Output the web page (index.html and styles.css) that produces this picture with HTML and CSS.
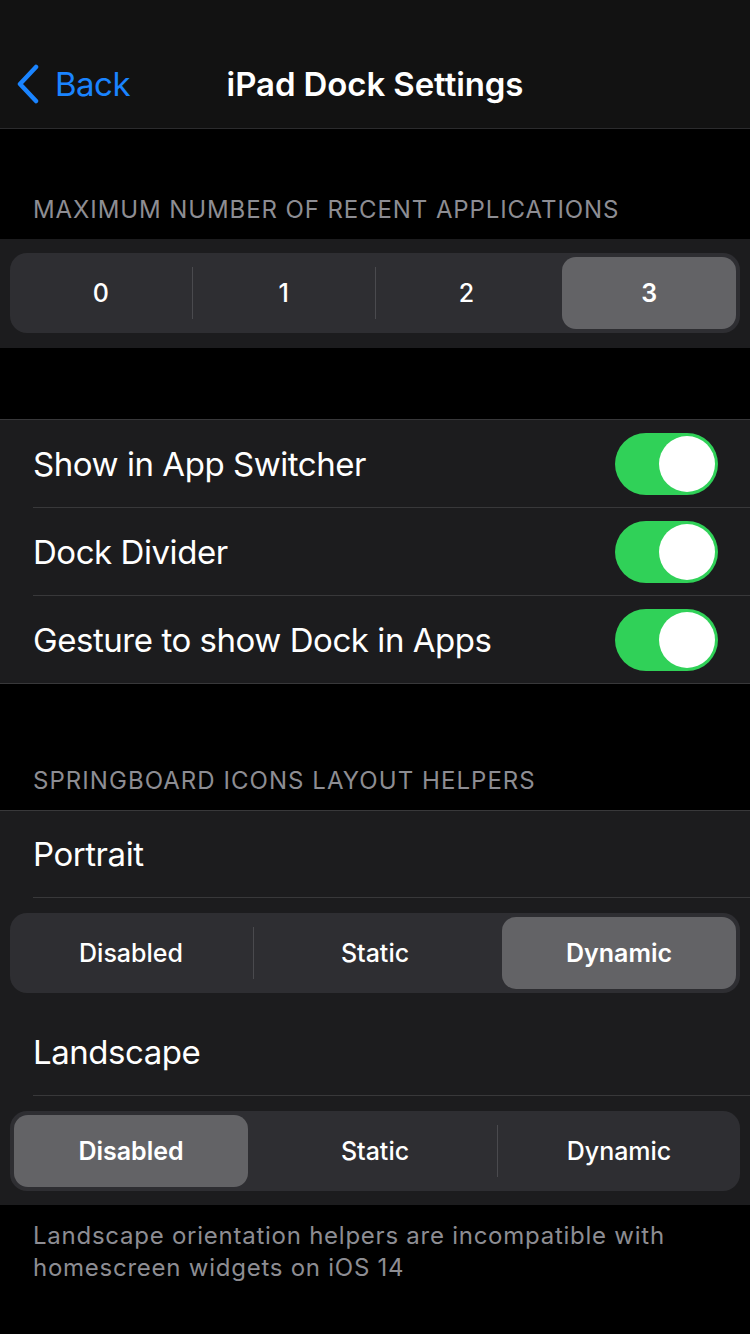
FILE: index.html
```html
<!DOCTYPE html>
<html>
<head>
<meta charset="utf-8">
<link rel="stylesheet" href="styles.css">
</head>
<body>
<div class="nav">
  <div class="nav-bar">
    <div class="back">
      <svg class="chev" width="26" height="40" viewBox="0 0 26 40"><path d="M21 3 L5 20 L21 37" fill="none" stroke="#1a84ff" stroke-width="4.5" stroke-linecap="round" stroke-linejoin="round"/></svg>
      <span class="back-text">Back</span>
    </div>
    <div class="title">iPad Dock Settings</div>
  </div>
</div>

<div class="sec-head first">MAXIMUM NUMBER OF RECENT APPLICATIONS</div>
<div class="group pad-seg">
  <div class="seg seg4">
    <div class="item">0</div><div class="div"></div>
    <div class="item">1</div><div class="div"></div>
    <div class="item">2</div><div class="div hide"></div>
    <div class="item sel">3</div>
  </div>
</div>

<div class="group bordered toggles">
  <div class="row sep"><span>Show in App Switcher</span><div class="toggle"><div class="knob"></div></div></div>
  <div class="row sep"><span>Dock Divider</span><div class="toggle"><div class="knob"></div></div></div>
  <div class="row"><span>Gesture to show Dock in Apps</span><div class="toggle"><div class="knob"></div></div></div>
</div>

<div class="sec-head second">SPRINGBOARD ICONS LAYOUT HELPERS</div>
<div class="group bordered-top">
  <div class="row label sep">Portrait</div>
  <div class="seg-wrap">
    <div class="seg seg3">
      <div class="item">Disabled</div><div class="div"></div>
      <div class="item">Static</div><div class="div hide"></div>
      <div class="item sel">Dynamic</div>
    </div>
  </div>
  <div class="row label sep land">Landscape</div>
  <div class="seg-wrap last">
    <div class="seg seg3">
      <div class="item sel">Disabled</div><div class="div hide"></div>
      <div class="item">Static</div><div class="div"></div>
      <div class="item">Dynamic</div>
    </div>
  </div>
</div>
<div class="footer">Landscape orientation helpers are incompatible with homescreen widgets on iOS 14</div>
</body>
</html>
```

FILE: styles.css
```css
* { box-sizing: border-box; }
html, body { margin: 0; padding: 0; }
body {
  background: #000;
  width: 750px;
  height: 1334px;
  overflow: hidden;
  font-family: Inter, "Noto Sans", sans-serif;
  color: #fff;
  -webkit-font-smoothing: antialiased;
}
.nav {
  background: #121212;
  height: 129px;
  border-bottom: 1px solid #2b2b2d;
  padding-top: 40px;
}
.nav-bar {
  position: relative;
  height: 88px;
  display: flex;
  align-items: center;
  justify-content: center;
}
.back {
  position: absolute;
  left: 15px;
  top: 24px;
  display: flex;
  align-items: center;
  color: #1a84ff;
}
.chev { display: block; }
.back-text {
  font-size: 33px;
  margin-left: 14px;
  letter-spacing: -0.5px;
}
.title {
  font-size: 33px;
  font-weight: 600;
  letter-spacing: -0.1px;
  margin-top: -1px;
}
.sec-head {
  color: #8d8d93;
  font-size: 24px;
  line-height: 30px;
  padding-left: 33px;
  letter-spacing: 0.9px;
  white-space: nowrap;
}
.sec-head.first { padding-top: 66px; padding-bottom: 14px; height: 110px; }
.sec-head.second { padding-top: 82px; padding-bottom: 14px; height: 126px; letter-spacing: 1.05px; }
.group { background: #1c1c1e; }
.pad-seg { padding: 14px 10px 15px; height: 109px; }
.bordered { margin-top: 71px; border-top: 1px solid #38383a; border-bottom: 1px solid #38383a; }
.bordered-top { border-top: 1px solid #38383a; }
.seg {
  display: flex;
  align-items: center;
  height: 80px;
  background: #2e2e32;
  border-radius: 17px;
  padding: 4px;
}
.seg .item {
  flex: 1 1 0;
  height: 72px;
  display: flex;
  align-items: center;
  justify-content: center;
  font-size: 25px;
  font-weight: 500;
  border-radius: 14px;
}
.seg .item.sel {
  background: #636366;
  font-weight: 600;
}
.seg .div {
  width: 1px;
  height: 52px;
  background: #4a4a4e;
}
.seg4 .div { margin: 0 4px; }
.seg3 .div { margin: 0 4.5px; }
.seg .div.hide { background: transparent; }
.row {
  height: 88px;
  margin-left: 33px;
  padding-right: 32px;
  display: flex;
  align-items: center;
  justify-content: space-between;
  font-size: 33px;
  letter-spacing: -0.45px;
}
.row.sep { border-bottom: 1px solid #38383a; }
.toggles .row:last-child { height: 87px; }
.toggle {
  width: 103px;
  height: 62px;
  border-radius: 31px;
  background: #30d158;
  padding: 3px;
  display: flex;
  justify-content: flex-end;
}
.knob {
  width: 56px;
  height: 56px;
  border-radius: 50%;
  background: #fff;
}
.label { height: 87px; }
.land { height: 88px; }
.seg-wrap { padding: 15px 10px; }
.seg-wrap.last { padding-bottom: 14px; }
.footer {
  color: #8d8d93;
  font-size: 24px;
  line-height: 32px;
  padding: 15px 40px 0 33px;
  letter-spacing: 0.75px;
}
```
